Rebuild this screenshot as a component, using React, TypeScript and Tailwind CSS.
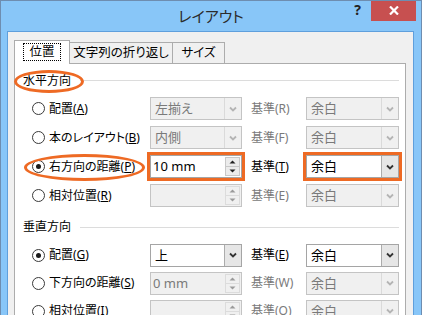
import type { ReactNode } from 'react';

type Box = { kind: 'drop' | 'spin'; text: string; on: boolean; mark?: boolean };
type Row = { checked: boolean; label: ReactNode; left: Box; base: ReactNode; baseOn: boolean; right: Box };

const ORANGE = 'outline-3 outline-[#ee6a24]';

function Chevron({ on }: { on: boolean }) {
  return (
    <svg width="8" height="6" viewBox="0 0 8 6">
      <path d="M1 1.5 L4 4.5 L7 1.5" fill="none" stroke={on ? '#333' : '#b4b4b4'} strokeWidth="1.8" />
    </svg>
  );
}

function Tri({ up, on }: { up: boolean; on: boolean }) {
  return (
    <svg width="7" height="4" viewBox="0 0 7 4">
      <path d={up ? 'M0.5 3.5 L3.5 0.5 L6.5 3.5 Z' : 'M0.5 0.5 L3.5 3.5 L6.5 0.5 Z'} fill={on ? '#222' : '#9a9a9a'} />
    </svg>
  );
}

function Field({ box, w }: { box: Box; w: string }) {
  const frame = box.on ? 'bg-white border-[#a5a5a5] text-black' : 'bg-[#f0f0f0] border-[#c4c4c4] text-[#7a7a7a]';
  return (
    <div className={`${w} h-[23px] flex border ${frame} ${box.mark ? ORANGE : ''}`}>
      <div className={`flex-1 flex items-center text-[13px] leading-none ${box.kind === 'spin' ? 'pl-[2px]' : 'pl-[4px]'}`}>
        {box.text}
      </div>
      {box.kind === 'drop' ? (
        <div
          className={`w-[17px] flex items-center justify-center border-l ${
            box.on ? 'bg-[#e6e6e6] border-[#acacac]' : 'border-[#dadada]'
          }`}
        >
          <Chevron on={box.on} />
        </div>
      ) : (
        <div className="w-[16px] flex flex-col py-px pr-px">
          <div className={`flex-1 flex items-center justify-center border ${box.on ? 'bg-[#ececec] border-[#c8c8c8]' : 'border-[#dcdcdc]'}`}>
            <Tri up on={box.on} />
          </div>
          <div className={`flex-1 flex items-center justify-center border border-t-0 ${box.on ? 'bg-[#ececec] border-[#c8c8c8]' : 'border-[#dcdcdc]'}`}>
            <Tri up={false} on={box.on} />
          </div>
        </div>
      )}
    </div>
  );
}

function Radio({ checked }: { checked: boolean }) {
  return (
    <div className="w-[13px] h-[13px] rounded-full border border-[#3a3a3a] bg-white flex items-center justify-center">
      {checked && <div className="w-[5px] h-[5px] rounded-full bg-[#1a1a1a]" />}
    </div>
  );
}

function Heading({ text, h }: { text: string; h: string }) {
  return (
    <div className={`${h} pt-[3px] flex items-center`}>
      <span className="text-[12px] text-black">{text}</span>
      <div className="flex-1 h-px bg-[#dcdcdc] ml-[9px]" />
    </div>
  );
}

function Line({ r, h }: { r: Row; h: string }) {
  return (
    <div className={`${h} flex items-center`}>
      <div className="ml-[9px]">
        <Radio checked={r.checked} />
      </div>
      <div className="ml-[4px] w-[101px] text-[12px] text-black whitespace-nowrap">{r.label}</div>
      <Field box={r.left} w="w-[92px]" />
      <div className={`ml-[9px] w-[55px] text-[12px] whitespace-nowrap ${r.baseOn ? 'text-black' : 'text-[#7a7a7a]'}`}>
        {r.base}
      </div>
      <Field box={r.right} w="w-[93px]" />
    </div>
  );
}

const gray = (t: string): Box => ({ kind: 'drop', text: t, on: false });

const horizontal: Row[] = [
  { checked: false, label: <>配置(<u>A</u>)</>, left: gray('左揃え'), base: '基準(R)', baseOn: false, right: gray('余白') },
  { checked: false, label: <>本のレイアウト(<u>B</u>)</>, left: gray('内側'), base: '基準(F)', baseOn: false, right: gray('余白') },
  {
    checked: true,
    label: <>右方向の距離(<u>P</u>)</>,
    left: { kind: 'spin', text: '10 mm', on: true, mark: true },
    base: <>基準(<u>T</u>)</>,
    baseOn: true,
    right: { kind: 'drop', text: '余白', on: true, mark: true },
  },
  { checked: false, label: <>相対位置(<u>R</u>)</>, left: { kind: 'spin', text: '', on: false }, base: '基準(E)', baseOn: false, right: gray('余白') },
];

const vertical: Row[] = [
  {
    checked: true,
    label: <>配置(<u>G</u>)</>,
    left: { kind: 'drop', text: '上', on: true },
    base: <>基準(<u>E</u>)</>,
    baseOn: true,
    right: { kind: 'drop', text: '余白', on: true },
  },
  { checked: false, label: <>下方向の距離(<u>S</u>)</>, left: { kind: 'spin', text: '0 mm', on: false }, base: '基準(W)', baseOn: false, right: gray('余白') },
  { checked: false, label: <>相対位置(<u>I</u>)</>, left: { kind: 'spin', text: '', on: false }, base: '基準(O)', baseOn: false, right: gray('余白') },
];

export default function App() {
  return (
    <div className="relative w-[422px] h-[315px] overflow-hidden bg-[#88c6f8] border-l border-t border-r border-[#6e8db0] font-['Noto_Sans','Noto_Sans_CJK_JP',sans-serif] [font-feature-settings:'palt']">
      {/* title bar */}
      <div className="h-[30px] grid grid-cols-[1fr_auto_1fr] items-center">
        <div />
        <div className="text-[15px] text-[#2b2b2b] leading-none">レイアウト</div>
        <div className="self-start flex justify-end mr-[5px] -mt-px">
          <div className="mt-[3px] mr-[10px] text-[14px] font-bold text-[#222] leading-none">?</div>
          <div className="w-[45px] h-[21px] bg-[#c75050] flex items-center justify-center">
            <svg width="10" height="9" viewBox="0 0 10 9">
              <path d="M1 0.5 L9 8.5 M9 0.5 L1 8.5" stroke="white" strokeWidth="2.2" />
            </svg>
          </div>
        </div>
      </div>

      {/* client area */}
      <div className="ml-[6px] w-[407px] h-[300px] bg-[#f0f0f0] border border-[#5f9fdc]">
        <div className="pt-[8px] pl-[6px] h-[31px] flex items-end">
          <div className="relative z-10 -mb-px w-[56px] h-[24px] bg-white border border-b-0 border-[#acacac] flex items-start justify-center pt-[2px]">
            <span className="px-[5px] border border-dotted border-black text-[12.5px] leading-[16px] text-black">位置</span>
          </div>
          <div className="-ml-px w-[104px] h-[21px] border border-b-0 border-[#acacac] bg-[#f0f0f0] flex items-center justify-center text-[12.5px] text-black whitespace-nowrap">
            文字列の折り返し
          </div>
          <div className="-ml-px w-[53px] h-[21px] border border-b-0 border-[#acacac] bg-[#f0f0f0] flex items-center justify-center text-[12.5px] text-black">
            サイズ
          </div>
        </div>
        <div className="ml-[6px] w-[392px] h-[300px] bg-white border border-[#acacac] pl-[8px] pr-[6px]">
          <Heading text="水平方向" h="h-[30px]" />
          {horizontal.map((r, i) => (
            <Line key={i} r={r} h="h-[29px]" />
          ))}
          <Heading text="垂直方向" h="h-[31px]" />
          {vertical.map((r, i) => (
            <Line key={i} r={r} h="h-[28px]" />
          ))}
        </div>
      </div>

      {/* annotations */}
      <div className="absolute left-[13px] top-[69px] w-[70px] h-[23px] rounded-[50%] border-[3px] border-[#ee6a24]" />
      <div className="absolute left-[23px] top-[153px] w-[121px] h-[27px] rounded-[50%] border-[3px] border-[#ee6a24]" />
    </div>
  );
}
